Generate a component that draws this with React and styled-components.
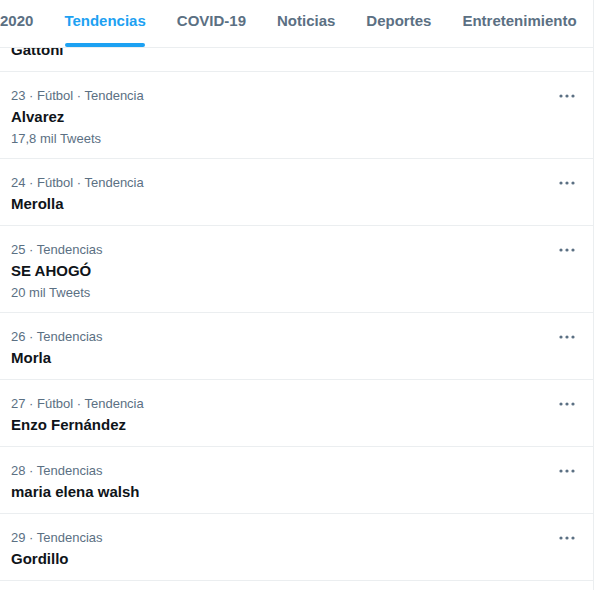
import React from "react";
import styled, { createGlobalStyle } from "styled-components";

const GlobalStyle = createGlobalStyle`
  html, body {
    margin: 0;
    padding: 0;
    background: #ffffff;
    font-family: "Segoe UI", "Liberation Sans", Arial, sans-serif;
  }
`;

const Column = styled.div`
  width: 593px;
  height: 590px;
  border-right: 1px solid #ebeef0;
  overflow: hidden;
  display: flex;
  flex-direction: column;
`;

const Header = styled.nav`
  flex: none;
  height: 47px;
  border-bottom: 1px solid #ebeef0;
  background: #ffffff;
  overflow: hidden;
  position: relative;
  z-index: 2;
`;

const TabStrip = styled.div`
  display: flex;
  height: 100%;
  margin-left: -15.5px;
`;

const Tab = styled.div`
  flex: none;
  height: 100%;
  box-sizing: border-box;
  padding: 11px 15.5px 0;
  font-size: 15px;
  line-height: 20px;
  font-weight: 700;
  color: ${(p) => (p.active ? "#1da1f2" : "#5b7083")};
`;

const Label = styled.span`
  position: relative;
  display: inline-block;
  height: 36px;
`;

const Indicator = styled.span`
  position: absolute;
  left: 1px;
  right: 1px;
  bottom: 0;
  height: 4px;
  border-radius: 9999px;
  background: #1da1f2;
`;

const ScrollArea = styled.div`
  flex: 1;
  overflow: hidden;
`;

const List = styled.div`
  margin-top: ${(p) => p.offset}px;
`;

const Row = styled.div`
  padding: 15px 17px 9px 11px;
  border-bottom: 1px solid #ebeef0;
`;

const MetaLine = styled.div`
  display: flex;
  align-items: center;
  justify-content: space-between;
  height: 17px;
`;

const Meta = styled.span`
  font-size: 13px;
  line-height: 17px;
  color: #5b7083;
`;

const Title = styled.div`
  font-size: 15px;
  line-height: 25px;
  font-weight: 700;
  color: #0f1419;
`;

const Count = styled.div`
  font-size: 13px;
  line-height: 20px;
  color: #5b7083;
`;

const MoreButton = styled.span`
  display: flex;
  width: 18px;
  height: 16px;
  align-items: center;
  justify-content: center;
`;

const tabs = ["2020", "Tendencias", "COVID-19", "Noticias", "Deportes", "Entretenimiento"];

const trends = [
  { meta: "22 · Fútbol · Tendencia", title: "Gattoni" },
  { meta: "23 · Fútbol · Tendencia", title: "Alvarez", count: "17,8 mil Tweets" },
  { meta: "24 · Fútbol · Tendencia", title: "Merolla" },
  { meta: "25 · Tendencias", title: "SE AHOGÓ", count: "20 mil Tweets" },
  { meta: "26 · Tendencias", title: "Morla" },
  { meta: "27 · Fútbol · Tendencia", title: "Enzo Fernández" },
  { meta: "28 · Tendencias", title: "maria elena walsh" },
  { meta: "29 · Tendencias", title: "Gordillo" },
];

const Dots = () => (
  <svg width="18" height="6" viewBox="0 0 18 6">
    <circle cx="3" cy="3" r="1.6" fill="#5b7083" />
    <circle cx="9" cy="3" r="1.6" fill="#5b7083" />
    <circle cx="15" cy="3" r="1.6" fill="#5b7083" />
  </svg>
);

const App = () => (
  <>
    <GlobalStyle />
    <Column>
      <Header>
        <TabStrip>
          {tabs.map((t) => (
            <Tab key={t} active={t === "Tendencias"}>
              <Label>
                {t}
                {t === "Tendencias" && <Indicator />}
              </Label>
            </Tab>
          ))}
        </TabStrip>
      </Header>
      <ScrollArea>
        <List offset={-43}>
          {trends.map((tr) => (
            <Row key={tr.meta}>
              <MetaLine>
                <Meta>{tr.meta}</Meta>
                <MoreButton>
                  <Dots />
                </MoreButton>
              </MetaLine>
              <Title>{tr.title}</Title>
              {tr.count && <Count>{tr.count}</Count>}
            </Row>
          ))}
        </List>
      </ScrollArea>
    </Column>
  </>
);

export default App;
